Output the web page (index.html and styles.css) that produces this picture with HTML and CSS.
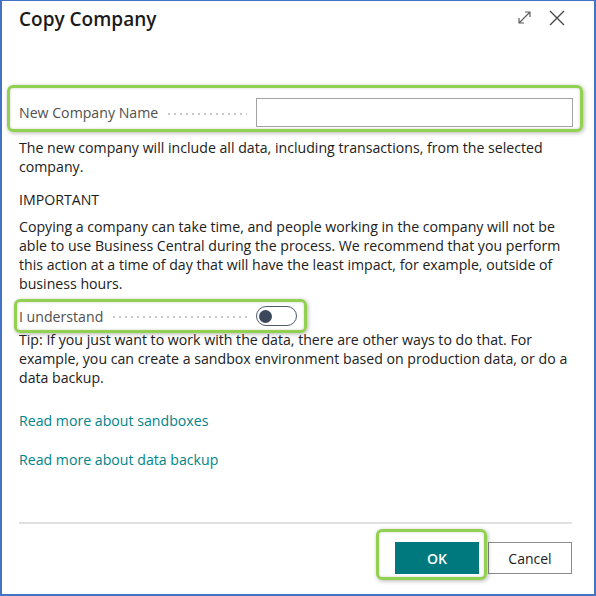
FILE: index.html
```html
<!DOCTYPE html>
<html lang="en">
<head>
<meta charset="utf-8">
<title>Copy Company</title>
<link rel="stylesheet" href="styles.css">
</head>
<body>
<div class="dialog">
  <header class="head">
    <h1 class="title">Copy Company</h1>
    <div class="tools">
      <svg class="ic ic-expand" width="15" height="15" viewBox="0 0 15 15" aria-hidden="true">
        <path d="M2 13 L13 2 M8 2 H13 V7 M2 8 V13 H7" fill="none" stroke="#5f5f5f" stroke-width="1.2"/>
      </svg>
      <svg class="ic ic-close" width="16" height="16" viewBox="0 0 16 16" aria-hidden="true">
        <path d="M1 1 L15 15 M15 1 L1 15" fill="none" stroke="#4a4a4a" stroke-width="1.4"/>
      </svg>
    </div>
  </header>
  <main class="body">
    <div class="hl hl-name">
      <div class="field">
        <label class="cap" for="name"><span>New Company Name</span><i class="dots"></i></label>
        <input class="input" id="name" type="text">
      </div>
    </div>
    <p class="txt p1">The new company will include all data, including transactions, from the selected<br>company.</p>
    <p class="txt group">IMPORTANT</p>
    <p class="txt p2">Copying a company can take time, and people working in the company will not be<br>able to use Business Central during the process. We recommend that you perform<br>this action at a time of day that will have the least impact, for example, outside of<br>business hours.</p>
    <div class="hl hl-toggle">
      <div class="field">
        <span class="cap"><span>I understand</span><i class="dots"></i></span>
        <span class="toggle"><span class="knob"></span></span>
      </div>
    </div>
    <p class="txt p3">Tip: If you just want to work with the data, there are other ways to do that. For<br>example, you can create a sandbox environment based on production data, or do a<br>data backup.</p>
    <a class="link l1" href="#">Read more about sandboxes</a>
    <a class="link l2" href="#">Read more about data backup</a>
  </main>
  <footer class="foot">
    <div class="actions">
      <button class="btn ok" type="button">OK</button>
      <button class="btn cancel" type="button">Cancel</button>
    </div>
  </footer>
</div>
</body>
</html>
```
FILE: styles.css
```css
html, body {
  margin: 0;
  padding: 0;
  background: #fff;
}
body {
  font-family: "Open Sans", "Noto Sans", sans-serif;
}
.dialog {
  width: 596px;
  height: 596px;
  box-sizing: border-box;
  border: 2px solid #4472c4;
  border-top-width: 1px;
  display: flex;
  flex-direction: column;
  padding: 0 21px 0 17px;
  color: #212121;
  font-size: 14.15px;
}
.head {
  display: flex;
  justify-content: space-between;
  align-items: flex-start;
  padding-top: 5px;
}
.title {
  margin: 0;
  font-size: 19px;
  font-weight: 600;
  line-height: 26px;
  color: #1a1a1a;
}
.tools {
  display: flex;
  align-items: flex-start;
  gap: 17px;
  padding-top: 4px;
  margin-right: 8px;
}
.ic { display: block; }
.body {
  display: flex;
  flex-direction: column;
  align-items: stretch;
}
.hl {
  border: 3px solid #92d050;
  border-radius: 6px;
  box-shadow: 1px 1px 4px rgba(0,0,0,0.3), inset 0 0 3px rgba(0,0,0,0.18);
}
.hl-name {
  margin: 53px -10px 0 -12px;
  padding: 10px 7px 2px 9px;
}
.field {
  display: flex;
  align-items: center;
  gap: 9px;
}
.cap {
  flex: 0 0 228px;
  display: flex;
  align-items: center;
  color: #505050;
  line-height: 19px;
}
.dots {
  flex: 1;
  height: 2px;
  margin: 2px 0 0 8px;
  background: radial-gradient(circle, #c8c8c8 0.7px, transparent 1px) 0 0 / 6px 2px repeat-x;
}
.input {
  flex: 1;
  height: 29px;
  box-sizing: border-box;
  margin: 0;
  padding: 0 6px;
  border: 1px solid #a3a3a3;
  background: #fff;
  font: inherit;
}
.txt {
  margin: 0;
  line-height: 19px;
  margin-right: -20px;
}
.p1 { margin-top: 6px; }
.group { margin-top: 14px; color: #1a1a1a; }
.p2 { margin-top: 8px; }
.hl-toggle {
  align-self: flex-start;
  margin: 6px 0 0 -5px;
  padding: 4px 7px 4px 2px;
}
.toggle {
  width: 41px;
  height: 20px;
  box-sizing: border-box;
  border: 1.5px solid #4f5a69;
  border-radius: 10px;
  display: flex;
  align-items: center;
  padding-left: 2px;
}
.knob {
  width: 13px;
  height: 13px;
  border-radius: 50%;
  background: #3b485c;
}
.p3 { margin-top: -3px; }
.link {
  display: block;
  align-self: flex-start;
  color: #008489;
  line-height: 19px;
  text-decoration: none;
}
.l1 { margin-top: 24px; }
.l2 { margin-top: 20px; }
.foot {
  margin-top: auto;
  border-top: 2px solid #e0e0e0;
  padding: 18px 0 20px;
  margin-right: 1px;
}
.actions {
  display: flex;
  justify-content: flex-end;
  gap: 9px;
}
.btn {
  width: 84px;
  height: 32px;
  box-sizing: border-box;
  margin: 0;
  padding: 0;
  font-family: inherit;
  font-size: 14px;
  cursor: pointer;
}
.ok {
  position: relative;
  background: #00797e;
  border: 1px solid #00797e;
  color: #fff;
  font-weight: 600;
}
.ok::after {
  content: "";
  position: absolute;
  left: -20px;
  top: -14px;
  right: -9px;
  bottom: -7px;
  border: 3px solid #92d050;
  border-radius: 6px;
  box-shadow: 1px 1px 4px rgba(0,0,0,0.3), inset 0 0 3px rgba(0,0,0,0.18);
  pointer-events: none;
}
.cancel {
  background: #fff;
  border: 1px solid #8a8a8a;
  color: #212121;
}
```
